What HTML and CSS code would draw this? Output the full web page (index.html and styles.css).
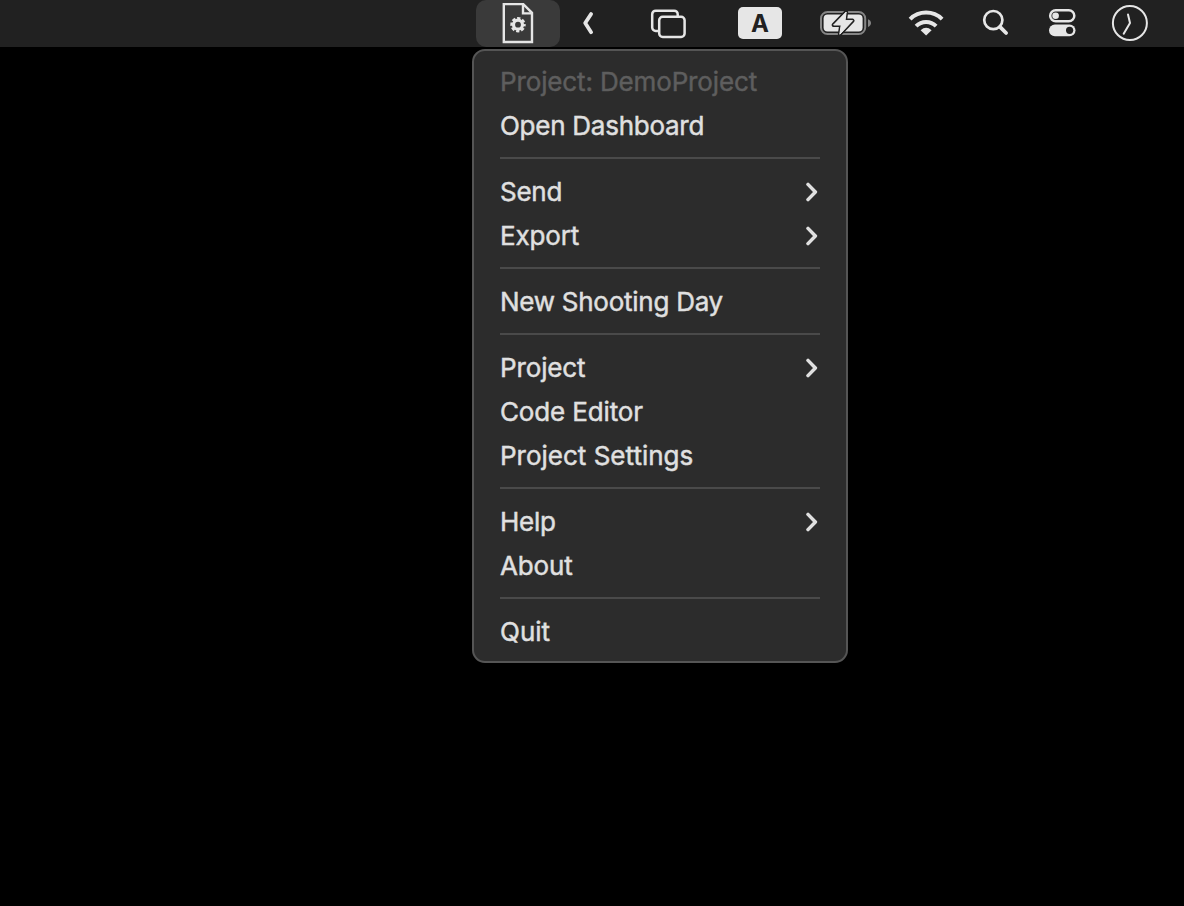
FILE: index.html
```html
<!DOCTYPE html>
<html lang="en">
<head>
<meta charset="utf-8">
<title>Menu bar</title>
<link rel="stylesheet" href="styles.css">
</head>
<body>
<header class="menubar">
  <div class="tray-active">
    <svg width="84" height="47" viewBox="476 0 84 47" fill="none" stroke="#e6e6e6" stroke-width="2.4">
      <path d="M503.8 4.1H523.3L532 12.8V42H503.8Z"/>
      <path d="M523 4V13.4H532"/>
      <circle cx="518" cy="24.7" r="4.5" stroke-width="3.2"/>
      <circle cx="518" cy="24.7" r="6.4" stroke-width="2.6" stroke-dasharray="3.2 1.827" stroke-dashoffset="1.6"/>
    </svg>
  </div>
  <svg width="70" height="47" viewBox="560 0 70 47" fill="none" stroke="#e6e6e6" stroke-width="3.8" stroke-linecap="round" stroke-linejoin="round">
    <path d="M591.1 14L585.2 23L591.1 32.2"/>
  </svg>
  <svg width="108" height="47" viewBox="630 0 108 47" fill="none" stroke="#e6e6e6" stroke-width="2.5">
    <path d="M658.5 31H655.7A3.5 3.5 0 0 1 652.2 27.5V14.2A3.5 3.5 0 0 1 655.7 10.7H674.2A3.5 3.5 0 0 1 677.7 14.2V16"/>
    <rect x="659.2" y="16.8" width="25.4" height="20.1" rx="3.5"/>
  </svg>
  <span class="input-source">A</span>
  <svg width="108" height="47" viewBox="782 0 108 47">
    <rect x="821" y="12" width="44.2" height="22" rx="6.5" fill="none" stroke="#858585" stroke-width="2"/>
    <rect x="823.6" y="14.6" width="39" height="16.8" rx="4" fill="#e6e6e6"/>
    <path d="M868 19.3C872 20.6 872 25.6 868 26.9Z" fill="#858585"/>
    <path d="M846.2 12L833.6 25H841.2L839.8 34.2L852.6 20.6H845Z" fill="#e6e6e6" stroke="#212121" stroke-width="4" stroke-linejoin="round" paint-order="stroke"/>
    <path d="M846.2 12L833.6 25H841.2L839.8 34.2L852.6 20.6H845Z" fill="#e6e6e6" stroke="#e6e6e6" stroke-width="1" stroke-linejoin="round"/>
  </svg>
  <svg width="72" height="47" viewBox="890 0 72 47" fill="none" stroke="#e6e6e6" stroke-width="4">
    <path d="M910.1 19.1A22.8 22.8 0 0 1 942.1 19.1"/>
    <path d="M916.1 26.1A14 14 0 0 1 936.1 26.1"/>
    <path d="M920.6 30.2Q926.1 25.4 931.6 30.2L926.1 35.4Z" fill="#e6e6e6" stroke="none"/>
  </svg>
  <svg width="68" height="47" viewBox="962 0 68 47" fill="none" stroke="#e6e6e6">
    <circle cx="993.3" cy="20.1" r="9.1" stroke-width="2.7"/>
    <path d="M1000 26.8L1006.1 33" stroke-width="3.8" stroke-linecap="round"/>
  </svg>
  <svg width="64" height="47" viewBox="1030 0 64 47">
    <rect x="1050.2" y="10.3" width="24.1" height="11" rx="5.5" fill="none" stroke="#e6e6e6" stroke-width="2.5"/>
    <circle cx="1055.6" cy="15.8" r="3.3" fill="#e6e6e6"/>
    <rect x="1049" y="24.4" width="26.5" height="11.8" rx="5.9" fill="#e6e6e6"/>
    <circle cx="1069.6" cy="30.3" r="3.6" fill="#212121"/>
  </svg>
  <svg width="90" height="47" viewBox="1094 0 90 47" fill="none" stroke="#e6e6e6" stroke-linecap="round" stroke-linejoin="round">
    <circle cx="1129.9" cy="23" r="17" stroke-width="2"/>
    <path d="M1128 14.5L1130 23L1123.7 33.7" stroke-width="2"/>
  </svg>
</header>
<nav class="menu">
  <div class="item disabled"><span>Project: DemoProject</span></div>
  <div class="item tight"><span>Open Dashboard</span></div>
  <hr class="rule">
  <div class="item tight"><span>Send</span><svg class="arrow" viewBox="0 0 14 20"><path d="M3 2.4L10.4 10L3 17.6"/></svg></div>
  <div class="item"><span>Export</span><svg class="arrow" viewBox="0 0 14 20"><path d="M3 2.4L10.4 10L3 17.6"/></svg></div>
  <hr class="rule">
  <div class="item tight"><span>New Shooting Day</span></div>
  <hr class="rule">
  <div class="item"><span>Project</span><svg class="arrow" viewBox="0 0 14 20"><path d="M3 2.4L10.4 10L3 17.6"/></svg></div>
  <div class="item"><span>Code Editor</span></div>
  <div class="item loose"><span>Project Settings</span></div>
  <hr class="rule">
  <div class="item tight"><span>Help</span><svg class="arrow" viewBox="0 0 14 20"><path d="M3 2.4L10.4 10L3 17.6"/></svg></div>
  <div class="item"><span>About</span></div>
  <hr class="rule">
  <div class="item loose"><span>Quit</span></div>
</nav>
</body>
</html>
```
FILE: styles.css
```css
* { box-sizing: border-box; }
html { background: #000; }
body {
  margin: 0;
  min-height: 906px;
  background: #000;
  color: #e0e0e0;
  font-family: Inter, "Liberation Sans", sans-serif;
  overflow: hidden;
}
.menubar {
  display: flex;
  align-items: flex-start;
  height: 47px;
  padding-left: 476px;
  background: #212121;
}
.menubar svg { display: block; flex: none; }
.tray-active {
  flex: none;
  width: 84px;
  height: 47px;
  border-radius: 10px;
  background: #3a3a3a;
}
.input-source {
  flex: none;
  width: 44px;
  height: 32px;
  margin-top: 7px;
  border-radius: 5px;
  background: #e6e6e6;
  color: #212121;
  font-size: 24px;
  font-weight: 700;
  line-height: 34px;
  text-align: center;
}
.menu {
  width: 376px;
  height: 614px;
  margin: 2px 0 0 472px;
  padding: 9px 26px 7px;
  border: 2px solid #555;
  border-radius: 13px;
  background: #2c2c2c;
}
.item {
  display: flex;
  align-items: center;
  justify-content: space-between;
  height: 44px;
  font-size: 26px;
  line-height: 44px;
  letter-spacing: -0.14px;
  white-space: nowrap;
  -webkit-text-stroke: 0.45px currentColor;
}
.tight { letter-spacing: -0.26px; }
.loose { letter-spacing: 0; }
.disabled { color: #5e5e5e; }
.rule {
  height: 2px;
  margin: 9px 0 11px;
  border: 0;
  background: #4a4a4a;
}
.arrow {
  width: 14px;
  height: 20px;
  margin-right: 1px;
  fill: none;
  stroke: #e0e0e0;
  stroke-width: 3.5;
  stroke-linecap: round;
  stroke-linejoin: round;
}
```
